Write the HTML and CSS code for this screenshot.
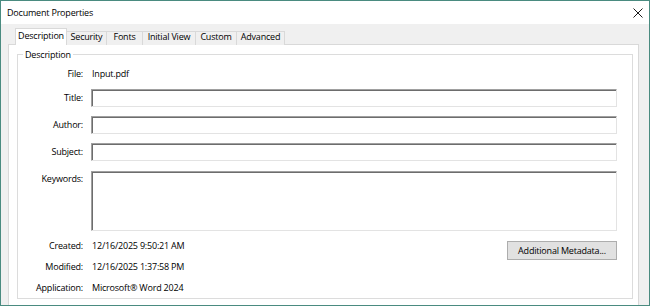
FILE: index.html
```html
<!DOCTYPE html>
<html>
<head>
<meta charset="utf-8">
<link rel="stylesheet" href="styles.css">
</head>
<body>
<div class="window">
  <div class="titlebar">
    <span class="title">Document Properties</span>
    <svg class="close" width="10" height="10" viewBox="0 0 10 10"><path d="M0.5 0.5L9.5 9.5M9.5 0.5L0.5 9.5" stroke="#1a1a1a" stroke-width="1" fill="none"/></svg>
  </div>
  <div class="body">
    <div class="tabs">
      <div class="tab active">Description</div>
      <div class="tab">Security</div>
      <div class="tab">Fonts</div>
      <div class="tab">Initial View</div>
      <div class="tab">Custom</div>
      <div class="tab">Advanced</div>
    </div>
    <div class="panel">
      <fieldset class="group">
        <legend>Description</legend>
        <div class="form">
          <div class="row row-file"><span class="label">File:</span><span class="value">Input.pdf</span></div>
          <div class="row row-title"><span class="label">Title:</span><div class="input"></div></div>
          <div class="row"><span class="label">Author:</span><div class="input"></div></div>
          <div class="row"><span class="label">Subject:</span><div class="input"></div></div>
          <div class="row row-keywords"><span class="label">Keywords:</span><div class="input textarea"></div></div>
        </div>
        <div class="meta">
          <span class="label">Created:</span><span class="value">12/16/2025 9:50:21 AM</span>
          <button class="button">Additional Metadata...</button>
          <span class="label">Modified:</span><span class="value">12/16/2025 1:37:58 PM</span>
          <span class="label">Application:</span><span class="value">Microsoft® Word 2024</span>
        </div>
      </fieldset>
    </div>
  </div>
</div>
</body>
</html>
```

FILE: styles.css
```css
html, body {
  margin: 0;
  padding: 0;
}
body {
  width: 650px;
  height: 306px;
  overflow: hidden;
  font-family: "Open Sans", "Noto Sans", sans-serif;
  font-size: 9px;
  letter-spacing: -0.2px;
  color: #000;
}
.window {
  box-sizing: border-box;
  width: 650px;
  height: 306px;
  border: 1px solid #4a8b80;
  display: flex;
  flex-direction: column;
  background: #f0f0f0;
}
.titlebar {
  height: 23px;
  flex: none;
  background: #fff;
  display: flex;
  align-items: center;
  justify-content: space-between;
  padding: 0 6px 0 6px;
}
.title {
  line-height: 16px;
}
.close {
  display: block;
  width: 10px;
  height: 10px;
}
.body {
  flex: 1;
  display: flex;
  flex-direction: column;
  min-height: 0;
}
.tabs {
  display: flex;
  align-items: flex-end;
  padding: 3px 0 0 14px;
  height: 17px;
  position: relative;
  z-index: 1;
}
.tab {
  box-sizing: border-box;
  height: 14px;
  line-height: 10px;
  padding: 0;
  text-align: center;
  border: 1px solid #d9d9d9;
  border-bottom: none;
  background: #f0f0f0;
  white-space: nowrap;
  margin-bottom: -1px;
}
.tab + .tab {
  border-left: none;
}
.tab.active {
  height: 17px;
  line-height: 14px;
  background: #fff;
}
.tabs .tab:nth-child(1) { width: 52px; }
.tabs .tab:nth-child(2) { width: 40px; }
.tabs .tab:nth-child(3) { width: 36px; }
.tabs .tab:nth-child(4) { width: 53px; }
.tabs .tab:nth-child(5) { width: 41px; }
.tabs .tab:nth-child(6) { width: 48px; }
.panel {
  flex: 1;
  margin: 0 10px 0 7px;
  background: #fff;
  border: 1px solid #d9d9d9;
  border-bottom: none;
  padding: 2px 5px 0 8px;
  min-height: 0;
}
.group {
  margin: 0;
  padding: 0 15px 2px 0;
  border: 1px solid #dcdcdc;
  min-width: 0;
}
.group legend {
  margin-left: 5px;
  padding: 0 2px;
  line-height: 15px;
}
.form {
  display: flex;
  flex-direction: column;
  padding-top: 4px;
}
.row {
  display: flex;
  align-items: center;
  column-gap: 8px;
  margin-top: 9px;
}
.row-file {
  margin-top: 0;
  line-height: 16px;
}
.row-title {
  margin-top: 7px;
}
.row-keywords {
  align-items: flex-start;
  margin-top: 10px;
}
.label {
  flex: none;
  width: 65px;
  text-align: right;
  line-height: 16px;
}
.value {
  padding-left: 1px;
  line-height: 16px;
}
.input {
  flex: 1;
  box-sizing: border-box;
  height: 18px;
  background: #fff;
  border: 1px solid;
  border-color: #a0a0a0 #e3e3e3 #e3e3e3 #a0a0a0;
  box-shadow: inset 1px 1px 0 #6d6d6d;
}
.textarea {
  height: 60px;
}
.meta {
  display: grid;
  grid-template-columns: 65px 1fr auto;
  grid-template-rows: 16px 16px 16px;
  column-gap: 8px;
  row-gap: 5px;
  margin-top: 7px;
}
.meta .label {
  grid-column: 1;
}
.meta .value {
  grid-column: 2;
}
.button {
  grid-column: 3;
  grid-row: 1 / span 2;
  align-self: start;
  margin-top: 3px;
  box-sizing: border-box;
  width: 110px;
  height: 19px;
  padding: 0;
  font: inherit;
  letter-spacing: inherit;
  color: #000;
  background: #e1e1e1;
  border: 1px solid #adadad;
}
```
